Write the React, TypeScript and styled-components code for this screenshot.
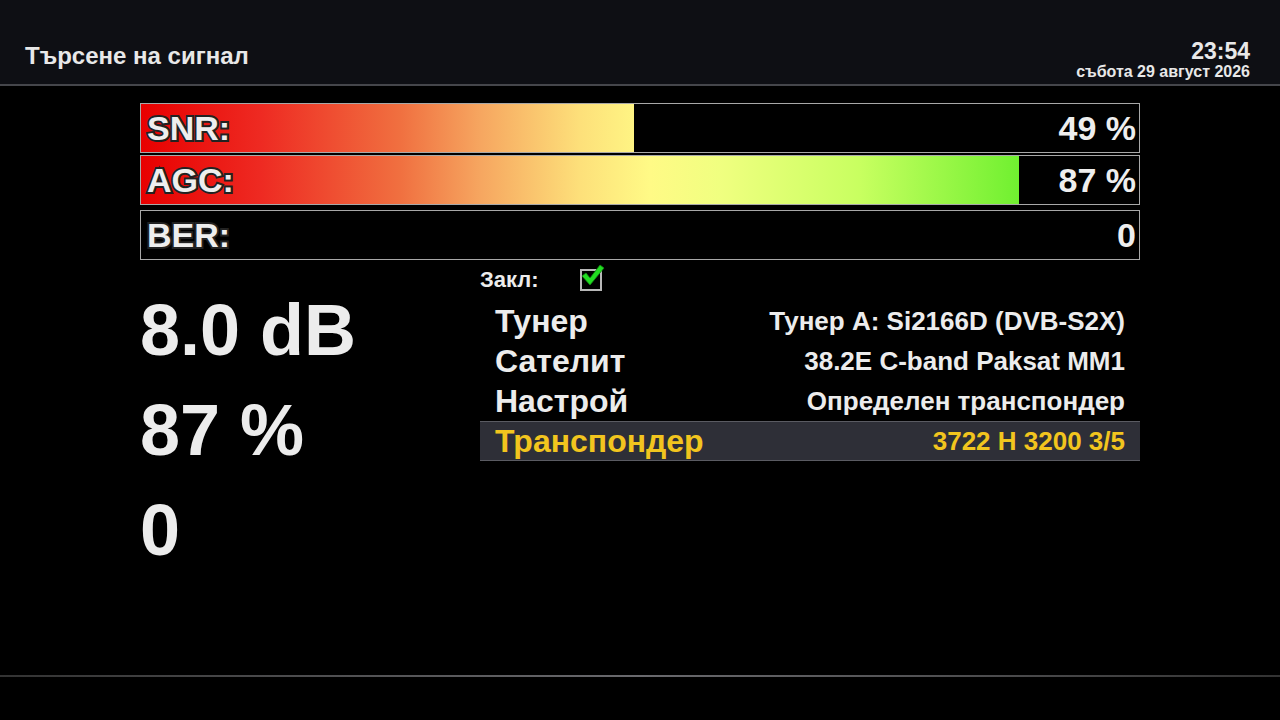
import React from 'react';
import styled, { createGlobalStyle } from 'styled-components';

const GlobalStyle = createGlobalStyle`
  html, body {
    margin: 0;
    padding: 0;
    background: #000;
  }
  body {
    font-family: 'Liberation Sans', Arial, sans-serif;
    font-weight: bold;
    color: #ececec;
  }
`;

interface Meter {
  label: string;
  value: string;
  percent: number;
}

interface InfoRow {
  name: string;
  value: string;
  selected?: boolean;
}

const meters: Meter[] = [
  { label: 'SNR:', value: '49 %', percent: 49.4 },
  { label: 'AGC:', value: '87 %', percent: 88 },
  { label: 'BER:', value: '0', percent: 0 },
];

const rows: InfoRow[] = [
  { name: 'Тунер', value: 'Тунер A: Si2166D (DVB-S2X)' },
  { name: 'Сателит', value: '38.2E C-band Paksat MM1' },
  { name: 'Настрой', value: 'Определен транспондер' },
  { name: 'Транспондер', value: '3722 H 3200 3/5', selected: true },
];

const bigValues = ['8.0 dB', '87 %', '0'];

export default function App() {
  return (
    <>
      <GlobalStyle />
      <Screen>
        <Header>
          <Title>Търсене на сигнал</Title>
          <Clock>
            <Time>23:54</Time>
            <DateText>събота 29 август 2026</DateText>
          </Clock>
        </Header>

        <Body>
          <Meters>
            {meters.map((m) => (
              <MeterBox key={m.label} $gap={m.label === 'BER:'}>
                <MeterFill>
                  <MeterGradient style={{ width: `${m.percent}%` }} />
                </MeterFill>
                <MeterLabel>{m.label}</MeterLabel>
                <MeterValue>{m.value}</MeterValue>
              </MeterBox>
            ))}
          </Meters>

          <Lower>
            <BigColumn>
              {bigValues.map((v) => (
                <BigValue key={v}>{v}</BigValue>
              ))}
            </BigColumn>

            <InfoColumn>
              <LockLine>
                <LockLabel>Закл:</LockLabel>
                <CheckBox>
                  <svg viewBox="0 0 26 26">
                    <path
                      d="M2 13 L6 10 L10 15 L20 2 L24 5 L10 22 Z"
                      fill="#22dd22"
                      stroke="#118811"
                      strokeWidth="0.8"
                    />
                  </svg>
                </CheckBox>
              </LockLine>
              {rows.map((r) => (
                <Row key={r.name} $selected={r.selected}>
                  <RowName>{r.name}</RowName>
                  <RowValue>{r.value}</RowValue>
                </Row>
              ))}
            </InfoColumn>
          </Lower>
        </Body>

        <Footer />
      </Screen>
    </>
  );
}

const Screen = styled.div`
  width: 1280px;
  height: 720px;
  display: flex;
  flex-direction: column;
  background: #000;
  overflow: hidden;
`;

const Header = styled.div`
  height: 86px;
  flex-shrink: 0;
  background: #0e0f14;
  border-bottom: 2px solid #45464b;
  display: flex;
  align-items: flex-end;
  justify-content: space-between;
  padding: 0 30px 3px 25px;
  box-sizing: border-box;
`;

const Title = styled.div`
  font-size: 24px;
  line-height: 28px;
  color: #e8e8e8;
  margin-bottom: 11px;
`;

const Clock = styled.div`
  display: flex;
  flex-direction: column;
  align-items: flex-end;
`;

const Time = styled.div`
  font-size: 23px;
  line-height: 24px;
  color: #e8e8e8;
`;

const DateText = styled.div`
  font-size: 16px;
  line-height: 18px;
  color: #e8e8e8;
`;

const Body = styled.div`
  flex: 1;
  padding: 17px 140px 0 140px;
  display: flex;
  flex-direction: column;
`;

const Meters = styled.div`
  display: flex;
  flex-direction: column;
  gap: 2px;
`;

const MeterBox = styled.div<{ $gap?: boolean }>`
  position: relative;
  height: 50px;
  box-sizing: border-box;
  border: 1px solid #a8a8a8;
  margin-top: ${(p) => (p.$gap ? '3px' : '0')};
  display: flex;
  align-items: center;
  justify-content: space-between;
  padding: 0 3px 0 6px;
`;

const MeterFill = styled.div`
  position: absolute;
  inset: 0;
`;

const MeterGradient = styled.div`
  height: 100%;
  background: linear-gradient(
    90deg,
    #e80000 0%,
    #ee2a22 12%,
    #f07040 26%,
    #f6a660 34%,
    #fde07a 44%,
    #fffa86 51%,
    #f0ff80 58%,
    #c8ff60 72%,
    #70f030 88%,
    #60f020 100%
  );
  background-size: 998px 100%;
`;

const MeterLabel = styled.span`
  position: relative;
  font-size: 34px;
  color: #eeeeee;
  -webkit-text-stroke: 4px #222;
  paint-order: stroke fill;
`;

const MeterValue = styled.span`
  position: relative;
  font-size: 34px;
  color: #eeeeee;
`;

const Lower = styled.div`
  display: flex;
  margin-top: 5px;
`;

const BigColumn = styled.div`
  width: 340px;
  display: flex;
  flex-direction: column;
  padding-top: 15px;
`;

const BigValue = styled.div`
  font-size: 72px;
  line-height: 100px;
  height: 100px;
  color: #ececec;
`;

const InfoColumn = styled.div`
  flex: 1;
  display: flex;
  flex-direction: column;
`;

const LockLine = styled.div`
  display: flex;
  align-items: center;
  height: 30px;
  margin-bottom: 6px;
`;

const LockLabel = styled.span`
  font-size: 22px;
  width: 100px;
`;

const CheckBox = styled.span`
  position: relative;
  width: 18px;
  height: 18px;
  border: 2px solid #b8b8b8;
  box-sizing: content-box;
  svg {
    position: absolute;
    left: -2px;
    top: -8px;
    width: 26px;
    height: 26px;
  }
`;

const Row = styled.div<{ $selected?: boolean }>`
  height: 40px;
  box-sizing: border-box;
  display: flex;
  align-items: center;
  justify-content: space-between;
  padding: 0 15px;
  color: ${(p) => (p.$selected ? '#f2c51e' : '#ececec')};
  background: ${(p) => (p.$selected ? '#2e2f37' : 'transparent')};
  border-top: 1px solid ${(p) => (p.$selected ? '#5a5b62' : 'transparent')};
  border-bottom: 1px solid ${(p) => (p.$selected ? '#5a5b62' : 'transparent')};
`;

const RowName = styled.span`
  font-size: 32px;
`;

const RowValue = styled.span`
  font-size: 26px;
`;

const Footer = styled.div`
  height: 43px;
  flex-shrink: 0;
  border-top: 2px solid;
  border-image: linear-gradient(90deg, #333 0%, #6a6a6e 50%, #333 100%) 1;
`;
